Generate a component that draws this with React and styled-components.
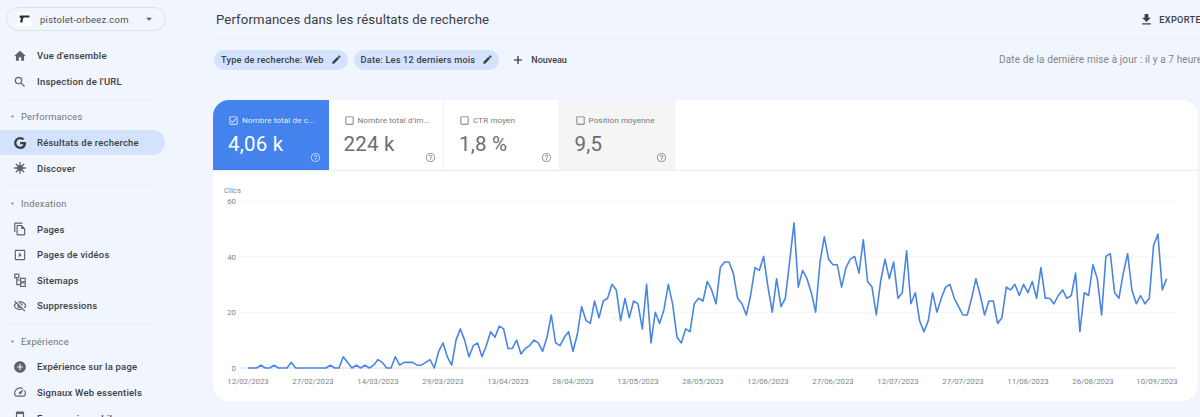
import React from "react";
import styled, { createGlobalStyle } from "styled-components";
import {
  MdHome, MdSearch, MdOutlineFileCopy, MdOutlineSlideshow, MdOutlineVisibilityOff,
  MdAddCircle, MdOutlineSpeed, MdOutlineSmartphone, MdEdit, MdFileDownload, MdAdd,
  MdArrowDropDown, MdCheckBoxOutlineBlank, MdOutlineCheckBox, MdHelpOutline,
} from "react-icons/md";

const Global = createGlobalStyle`
  html, body { margin: 0; padding: 0; background: #f1f5fd; }
  body { font-family: Roboto, "Liberation Sans", sans-serif; }
`;

const Page = styled.div`
  display: flex; width: 1200px; height: 417px; overflow: hidden; background: #f1f5fd;
`;
const Sidebar = styled.aside`
  flex: none; width: 213px; box-sizing: border-box; padding-top: 7px;
`;
const DomainPill = styled.div`
  display: flex; align-items: center; width: 160px; height: 24px; margin: 0 0 12.2px 6px;
  box-sizing: border-box; border: 1px solid #dde1e9; border-radius: 12px; padding: 0 9px 0 10px;
  font-size: 9.5px; font-weight: 400; letter-spacing: .25px; color: #4a4e52;
`;
const Favicon = styled.span`
  flex: none; display: flex; align-items: center; justify-content: center; width: 14px; height: 14px;
  background: #fff; margin-right: 9px;
`;
const DomainName = styled.span`flex: 1;`;
const NavRow = styled.div`
  display: flex; align-items: center; width: 165px; height: 25.6px; box-sizing: border-box;
  padding-left: 13px; gap: 10px; font-size: 9.5px; font-weight: 500; letter-spacing: .2px; color: #3c4043;
  border-radius: 0 13px 13px 0;
  background: ${(p) => (p.$active ? "#d3e3fd" : "transparent")};
  svg { flex: none; width: 14px; height: 14px; color: #5f6368; }
`;
const Divider = styled.div`
  width: 150px; height: 1px; margin: 4.4px 0 4.4px 8px; background: #ebeef5;
`;
const SectionHead = styled.div`
  display: flex; align-items: center; height: 25.6px; padding-left: 8px; gap: 4px;
  font-size: 9.3px; font-weight: 400; letter-spacing: .25px; color: #70757a;
  svg { width: 9px; height: 9px; color: #80868b; }
`;
const Main = styled.main`flex: none; width: 1010px;`;
const Header = styled.header`
  display: flex; align-items: center; justify-content: space-between; height: 38px;
  border-bottom: 1px solid #e9edf5; padding-left: 3px;
`;
const Title = styled.h1`
  margin: 0; font-size: 13.2px; font-weight: 400; color: #3c4043; letter-spacing: .1px;
`;
const ExportBtn = styled.div`
  display: flex; align-items: center; gap: 5px; padding-right: 16px;
  font-size: 9.2px; font-weight: 500; letter-spacing: .3px; color: #3c4043;
  svg { width: 15px; height: 15px; color: #3c4043; }
`;
const FilterBar = styled.div`
  display: flex; align-items: center; gap: 6px; height: 20px; margin: 10.5px 0 30.5px 1px;
`;
const Chip = styled.div`
  display: flex; align-items: center; gap: 7px; height: 20px; padding: 0 6px 0 7px;
  background: #d3e3fd; border-radius: 10px;
  font-size: 9.2px; font-weight: 500; letter-spacing: .2px; color: #3c4043;
  svg { width: 11px; height: 11px; color: #3c4043; }
`;
const NewBtn = styled.div`
  display: flex; align-items: center; gap: 6px; margin-left: 6px;
  font-size: 9px; font-weight: 500; color: #3c4043;
  svg { width: 14px; height: 14px; color: #202124; }
`;
const Updated = styled.div`
  margin-left: auto; display: flex; align-items: center; gap: 3px;
  font-size: 10px; letter-spacing: .12px; color: #80868b; white-space: nowrap; width: 224px;
  svg { flex: none; width: 11px; height: 11px; }
`;
const Card = styled.section`
  width: 985px; height: 301px; background: #fff; border-radius: 16px; overflow: hidden;
`;
const Tiles = styled.div`
  display: flex; height: 70px; border-bottom: 1px solid #eeeeee;
`;
const Tile = styled.div`
  position: relative; width: 115.5px; box-sizing: border-box; padding: 14px 0 0 15px;
  background: ${(p) => (p.$selected ? "#4483ee" : p.$grey ? "#f5f5f5" : "#fff")};
  color: ${(p) => (p.$selected ? "#fff" : "#5f6368")};
  border-right: 1px solid ${(p) => (p.$selected ? "#4483ee" : "#f1f1f1")};
`;
const TileLabel = styled.div`
  display: flex; align-items: center; gap: 3px; height: 12px;
  font-size: 8.1px; letter-spacing: .1px; white-space: nowrap; opacity: .85;
  svg { flex: none; width: 11px; height: 11px; }
`;
const TileValue = styled.div`
  margin-top: 4px; font-size: 20.5px; line-height: 28px; font-weight: 400; letter-spacing: .2px;
  color: ${(p) => (p.$selected ? "#fff" : "#6a6e72")};
`;
const TileHelp = styled.span`
  position: absolute; right: 7px; bottom: 7px; display: flex; opacity: .65;
  svg { width: 11px; height: 11px; }
`;
const ChartSvg = styled.svg`display: block; width: 985px; height: 230px;`;
const AxisText = styled.text`
  font-family: Roboto, "Liberation Sans", sans-serif; font-size: 7.8px; fill: #80868b;
`;

const DATA = [0,0,0,1,0,0,1,0,0,0,2,0,0,0,0,0,0,0,0,1,0,0,4,2,0,1,0,1,0,1,3,2,0,0,4,1,2,2,2,1,1,2,3,0,6,9,4,1,10,14,10,4,8,9,4,8,13,11,15,14,7,7,10,5,7,8,10,9,6,11,19,9,8,11,13,6,12,22,17,16,24,18,24,25,30,28,17,25,18,24,23,14,30,9,20,16,21,30,23,11,9,14,13,23,25,24,31,28,23,36,38,38,34,25,23,19,26,36,35,40,29,20,32,22,25,38,52,29,35,32,27,20,38,47,39,37,37,29,36,39,40,34,46,31,29,19,31,39,32,38,25,27,42,23,27,17,13,17,27,20,25,29,30,25,22,19,19,25,32,26,19,24,24,16,18,29,28,30,26,30,27,31,25,36,25,25,23,26,28,25,26,34,13,27,26,37,32,19,40,41,27,25,34,41,28,23,26,23,25,44,48,28,32];
const DATES = [
  [248,"12/02/2023"],[313,"27/02/2023"],[378,"14/03/2023"],[443,"29/03/2023"],[508,"13/04/2023"],
  [573,"28/04/2023"],[638,"13/05/2023"],[703,"28/05/2023"],[768,"12/06/2023"],[833,"27/06/2023"],
  [898,"12/07/2023"],[963,"27/07/2023"],[1028,"11/08/2023"],[1093,"26/08/2023"],[1157,"10/09/2023"],
];
const yOf = (v) => 368 - v * 2.79;
const LINE = DATA.map((v, i) => `${(248 + i * 4.333).toFixed(1)},${yOf(v).toFixed(1)}`).join(" ");

const GoogleG = () => (
  <svg viewBox="0 0 24 24"><path fill="#3c4043" d="M12.2 10.2v3.9h5.6c-.6 2.6-2.8 4.3-5.6 4.3a6.4 6.4 0 1 1 4.3-11.2l2.9-2.9A10.4 10.4 0 0 0 12.2 1.6a10.4 10.4 0 1 0 0 20.8c6 0 10.2-4.2 10.2-10.1 0-.7-.1-1.4-.2-2.1z" /></svg>
);
const DiscoverIcon = () => (
  <svg viewBox="0 0 24 24" stroke="#5f6368" strokeWidth="2.2" strokeLinecap="round" fill="#5f6368">
    <circle cx="12" cy="12" r="4" />
    <path d="M12 3v18M3 12h18M5.6 5.6l12.8 12.8M18.4 5.6 5.6 18.4" />
  </svg>
);
const SitemapIcon = () => (
  <svg viewBox="0 0 24 24" fill="none" stroke="#5f6368" strokeWidth="2">
    <rect x="3" y="2" width="7" height="6" /><rect x="13" y="9" width="8" height="6" /><rect x="13" y="17" width="8" height="6" />
    <path d="M6.5 8v12H13M6.5 12H13" />
  </svg>
);
const PistolIcon = () => (
  <svg width="11" height="8" viewBox="0 0 22 16"><path fill="#26323a" d="M1 1h20v4H10l-2 2-1 8H2l2-9-3-1z" /></svg>
);

const Nav = ({ icon, children, active }) => <NavRow $active={active}>{icon}<span>{children}</span></NavRow>;
const Section = ({ children }) => <SectionHead><MdArrowDropDown /><span>{children}</span></SectionHead>;

const MetricTile = ({ label, value, selected, grey }) => (
  <Tile $selected={selected} $grey={grey}>
    <TileLabel>{selected ? <MdOutlineCheckBox /> : <MdCheckBoxOutlineBlank />}<span>{label}</span></TileLabel>
    <TileValue $selected={selected}>{value}</TileValue>
    <TileHelp><MdHelpOutline /></TileHelp>
  </Tile>
);

export default function App() {
  return (
    <Page>
      <Global />
      <Sidebar>
        <DomainPill>
          <Favicon><PistolIcon /></Favicon>
          <DomainName>pistolet-orbeez.com</DomainName>
          <MdArrowDropDown size={14} color="#5f6368" />
        </DomainPill>
        <Nav icon={<MdHome />}>Vue d'ensemble</Nav>
        <Nav icon={<MdSearch />}>Inspection de l'URL</Nav>
        <Divider />
        <Section>Performances</Section>
        <Nav active icon={<GoogleG />}>Résultats de recherche</Nav>
        <Nav icon={<DiscoverIcon />}>Discover</Nav>
        <Divider />
        <Section>Indexation</Section>
        <Nav icon={<MdOutlineFileCopy />}>Pages</Nav>
        <Nav icon={<MdOutlineSlideshow />}>Pages de vidéos</Nav>
        <Nav icon={<SitemapIcon />}>Sitemaps</Nav>
        <Nav icon={<MdOutlineVisibilityOff />}>Suppressions</Nav>
        <Divider />
        <Section>Expérience</Section>
        <Nav icon={<MdAddCircle />}>Expérience sur la page</Nav>
        <Nav icon={<MdOutlineSpeed />}>Signaux Web essentiels</Nav>
        <Nav icon={<MdOutlineSmartphone />}>Ergonomie mobile</Nav>
      </Sidebar>
      <Main>
        <Header>
          <Title>Performances dans les résultats de recherche</Title>
          <ExportBtn><MdFileDownload /><span>EXPORTER</span></ExportBtn>
        </Header>
        <FilterBar>
          <Chip>Type de recherche: Web <MdEdit /></Chip>
          <Chip>Date: Les 12 derniers mois <MdEdit /></Chip>
          <NewBtn><MdAdd /><span>Nouveau</span></NewBtn>
          <Updated>Date de la dernière mise à jour : il y a 7 heures <MdHelpOutline /></Updated>
        </FilterBar>
        <Card>
          <Tiles>
            <MetricTile selected label="Nombre total de c..." value="4,06 k" />
            <MetricTile label="Nombre total d'im..." value="224 k" />
            <MetricTile label="CTR moyen" value="1,8 %" />
            <MetricTile grey label="Position moyenne" value="9,5" />
          </Tiles>
          <ChartSvg viewBox="213 171 985 230">
            <AxisText x="224" y="193">Clics</AxisText>
            {[60, 40, 20, 0].map((v) => (
              <g key={v}>
                <line x1="240" x2="1175" y1={yOf(v * 0.9976)} y2={yOf(v * 0.9976)} stroke={v === 0 ? "#dadce0" : "#f5f6f8"} strokeWidth="1" />
                <AxisText x="236" y={yOf(v * 0.9976) + 3} textAnchor="end">{v}</AxisText>
              </g>
            ))}
            {DATES.map(([x, d]) => <AxisText key={d} x={x} y="384" textAnchor="middle">{d}</AxisText>)}
            <polyline points={LINE} fill="none" stroke="#4a85e4" strokeWidth="1.6" strokeLinejoin="round" />
          </ChartSvg>
        </Card>
      </Main>
    </Page>
  );
}
